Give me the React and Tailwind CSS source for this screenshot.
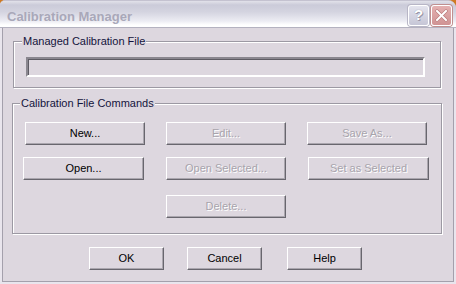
import React from "react";

const Btn = ({ children, disabled, className = "" }) => (
    <button
        disabled={disabled}
        className={`h-[23px] flex items-center justify-center bg-[#ddd7df] border border-t-white border-l-white border-r-[#68666e] border-b-[#68666e] shadow-[inset_-1px_-1px_0_#aaa6ae] text-[11px] leading-none ${disabled ? "text-[#a8a4ac] [text-shadow:1px_1px_0_#fff]" : "text-black"} ${className}`}
    >
        {children}
    </button>
);

const Group = ({ label, labelLeft, className = "", children }) => (
    <div className={`relative border border-[#9c99a3] shadow-[inset_1px_1px_0_#fff,1px_1px_0_#fff] ${className}`}>
        <span
            className={`absolute -top-[7px] ${labelLeft} px-[1px] bg-[#ddd7df] text-[11px] leading-[13px] text-[#14143c]`}
        >
            {label}
        </span>
        {children}
    </div>
);

export default function App() {
    return (
        <div className="w-[456px] h-[284px] bg-[#cf7a22] font-['Liberation_Sans',Arial,sans-serif] overflow-hidden">
            <div className="h-full flex flex-col rounded-tl-[5px] rounded-tr-[8px] overflow-hidden bg-[#e9e5ed] border-t border-[#c4c2d0]">
                {/* Title bar */}
                <div className="h-[27px] shrink-0 flex items-start bg-[linear-gradient(to_bottom,#e2e2ea_0px,#cbcbd9_4px,#d4d4e0_11px,#ececf3_20px,#ffffff_24px,#ffffff_26px)] border-b border-[#b4b2c0]">
                    <span className="ml-[7px] mt-[8px] text-[13px] leading-[15px] font-bold text-[#a9a8b9]">
                        Calibration Manager
                    </span>
                    <div className="ml-auto mr-[4px] mt-[4px] flex gap-[2px]">
                        <div className="w-[21px] h-[21px] rounded-[3px] border border-white bg-[linear-gradient(to_bottom,#e4e4ee,#c6c6d6)] shadow-[0_0_0_1px_#b8b6c6] flex items-center justify-center text-[15px] font-bold text-white [text-shadow:0_0_1px_#8a889a,1px_1px_0_#9a98aa]">
                            ?
                        </div>
                        <div className="w-[21px] h-[21px] rounded-[3px] border border-white bg-[linear-gradient(to_bottom,#e4b0b0,#d09494)] shadow-[0_0_0_1px_#c09090] flex items-center justify-center">
                            <svg width="13" height="13" viewBox="0 0 13 13">
                                <path d="M2 2 L11 11 M11 2 L2 11" stroke="#b87878" strokeWidth="3.2" strokeLinecap="square" />
                                <path d="M2 2 L11 11 M11 2 L2 11" stroke="#ffffff" strokeWidth="2" strokeLinecap="square" />
                            </svg>
                        </div>
                    </div>
                </div>

                {/* Body */}
                <div className="flex-1 mx-[2px] mb-[2px] border-x border-b border-[#a4a0ac] bg-[#ddd7df] flex flex-col">
                    <Group label="Managed Calibration File" labelLeft="left-[8px]" className="ml-[10px] mt-[13px] w-[428px] h-[47px]">
                        <div className="ml-[12px] mt-[15px] w-[399px] h-[20px] border-2 border-t-[#8a878f] border-l-[#8a878f] border-b-white border-r-white shadow-[inset_1px_1px_0_#5e5c64]" />
                    </Group>

                    <Group label="Calibration File Commands" labelLeft="left-[7px]" className="ml-[9px] mt-[15px] w-[430px] h-[131px]">
                        <div className="ml-[12px] mt-[18px] flex gap-[21px]">
                            <Btn className="w-[120px]">New...</Btn>
                            <Btn disabled className="w-[120px]">Edit...</Btn>
                            <Btn disabled className="w-[120px]">Save As...</Btn>
                        </div>
                        <div className="ml-[10px] mt-[12px] flex gap-[22px]">
                            <Btn className="w-[121px]">Open...</Btn>
                            <Btn disabled className="w-[120px]">Open Selected...</Btn>
                            <Btn disabled className="w-[121px]">Set as Selected</Btn>
                        </div>
                        <div className="ml-[153px] mt-[15px] flex">
                            <Btn disabled className="w-[120px]">Delete...</Btn>
                        </div>
                    </Group>

                    <div className="ml-[86px] mt-[13px] flex">
                        <Btn className="w-[75px]">OK</Btn>
                        <Btn className="w-[75px] ml-[23px]">Cancel</Btn>
                        <Btn className="w-[75px] ml-[25px]">Help</Btn>
                    </div>
                </div>
            </div>
        </div>
    );
}
